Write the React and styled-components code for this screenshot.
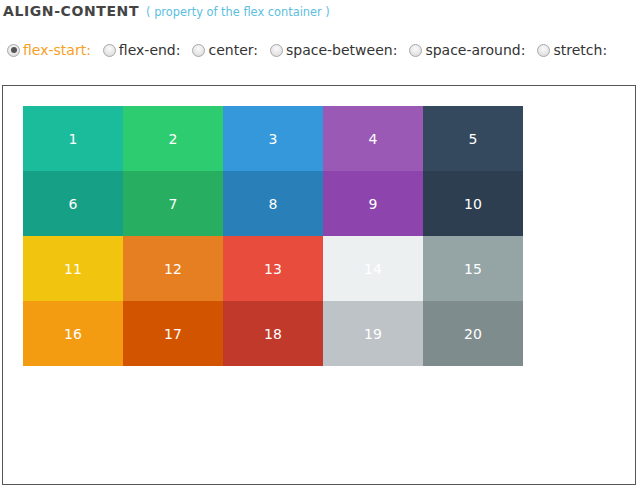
import React, { useState } from 'react';
import styled, { createGlobalStyle } from 'styled-components';

const colors = [
  '#1abc9c', '#2ecc71', '#3498db', '#9b59b6', '#34495e',
  '#16a085', '#27ae60', '#2980b9', '#8e44ad', '#2c3e50',
  '#f1c40f', '#e67e22', '#e74c3c', '#ecf0f1', '#95a5a6',
  '#f39c12', '#d35400', '#c0392b', '#bdc3c7', '#7f8c8d'
];

const options = ['flex-start', 'flex-end', 'center', 'space-between', 'space-around', 'stretch'];

const App = () => {
  const [value, setValue] = useState('flex-start');
  return (
    <Page>
      <GlobalStyle />
      <Header>
        <Title>align-content</Title>
        <Subtitle>( property of the flex container )</Subtitle>
      </Header>
      <Options>
        {options.map(opt => (
          <Option key={opt} active={opt === value}>
            <Radio
              type="radio"
              name="align-content"
              checked={opt === value}
              onChange={() => setValue(opt)}
            />
            {opt}:
          </Option>
        ))}
      </Options>
      <Container align={value}>
        {colors.map((c, i) => (
          <Item key={c} color={c}>
            {i + 1}
          </Item>
        ))}
      </Container>
    </Page>
  );
};

const GlobalStyle = createGlobalStyle`
  body {
    margin: 0;
    background: #fff;
    font-family: "DejaVu Sans", Verdana, sans-serif;
  }
`;

const Page = styled.div`
  padding: 0 2px;
  width: 634px;
`;

const Header = styled.div`
  display: flex;
  align-items: baseline;
  height: 22px;
  padding-left: 1px;
`;

const Title = styled.h1`
  margin: 0;
  font-size: 14px;
  font-weight: 900;
  text-transform: uppercase;
  letter-spacing: 0.6px;
  color: #444;
  line-height: 22px;
`;

const Subtitle = styled.span`
  margin-left: 7px;
  font-size: 11.4px;
  color: #5bc0de;
`;

const Options = styled.div`
  display: flex;
  align-items: center;
  height: 20px;
  margin-top: 18px;
`;

const Option = styled.label`
  display: flex;
  align-items: center;
  font-size: 14px;
  color: ${props => (props.active ? '#f8a01e' : '#333')};
  margin-right: 7px;
  white-space: nowrap;
`;

const Radio = styled.input`
  appearance: none;
  width: 13px;
  height: 13px;
  margin: 0 3px 0 5px;
  border-radius: 50%;
  border: 1px solid #a8a8a8;
  background: radial-gradient(circle at 50% 35%, #fafafa 0%, #e2e2e2 70%, #d0d0d0 100%);
  box-sizing: border-box;
  position: relative;
  &:checked::after {
    content: '';
    position: absolute;
    left: 2.5px;
    top: 2.5px;
    width: 6px;
    height: 6px;
    border-radius: 50%;
    background: #555;
  }
`;

const Container = styled.div`
  margin-top: 25px;
  height: 400px;
  box-sizing: border-box;
  border: 1px solid #555;
  padding: 20px;
  display: flex;
  flex-wrap: wrap;
  align-content: ${props => props.align};
`;

const Item = styled.div`
  width: 100px;
  height: 65px;
  display: flex;
  align-items: center;
  justify-content: center;
  background: ${props => props.color};
  color: #fff;
  font-size: 14px;
`;

export default App;
